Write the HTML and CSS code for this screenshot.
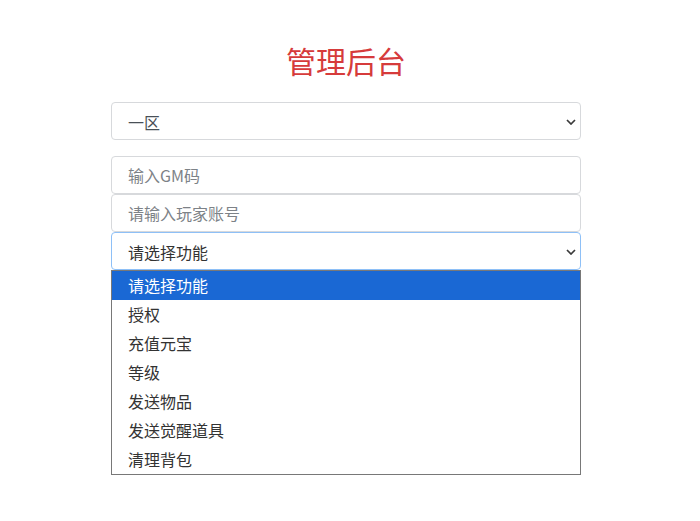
FILE: index.html
```html
<!DOCTYPE html>
<html lang="zh">
<head>
<meta charset="utf-8">
<title>管理后台</title>
<link rel="stylesheet" href="styles.css">
</head>
<body>
<div class="panel">
  <h1 class="title">管理后台</h1>
  <div class="field">
    <div class="control box">一区</div>
    <svg class="chev" width="10" height="6" viewBox="0 0 10 6"><path d="M1 1l4 4 4-4" fill="none" stroke="#3a3a3a" stroke-width="1.7"/></svg>
  </div>
  <div class="stack">
    <input class="control" type="text" placeholder="输入GM码">
    <input class="control" type="text" placeholder="请输入玩家账号">
    <div class="field">
      <div class="control box focused">请选择功能</div>
      <svg class="chev" width="10" height="6" viewBox="0 0 10 6"><path d="M1 1l4 4 4-4" fill="none" stroke="#3a3a3a" stroke-width="1.7"/></svg>
    </div>
    <div class="choices">
      <div class="choice on">请选择功能</div>
      <div class="choice">授权</div>
      <div class="choice">充值元宝</div>
      <div class="choice">等级</div>
      <div class="choice">发送物品</div>
      <div class="choice">发送觉醒道具</div>
      <div class="choice">清理背包</div>
    </div>
  </div>
</div>
</body>
</html>
```

FILE: styles.css
```css
html, body {
  margin: 0;
  padding: 0;
  background: #fff;
  font-family: "Noto Sans CJK SC", "Noto Sans", sans-serif;
}
.panel {
  width: 470px;
  margin-left: 111px;
  padding-top: 40px;
}
.title {
  margin: 0 0 22px;
  text-align: center;
  color: #d63b3b;
  font-size: 30px;
  font-weight: 400;
  line-height: 40px;
}
.field {
  position: relative;
}
.control {
  display: block;
  box-sizing: border-box;
  width: 100%;
  height: 38px;
  margin: 0;
  padding: 0 12px 1px 16px;
  border: 1px solid #d7d9dc;
  border-radius: 4px;
  background: #fff;
  font-family: inherit;
  font-size: 16px;
  color: #495057;
  outline: none;
}
.control::placeholder {
  color: #7d8287;
}
.box {
  line-height: 33px;
  padding-top: 3px;
  padding-bottom: 0;
}
.focused {
  border-color: #8ec0f7;
  color: #333;
}
.chev {
  position: absolute;
  right: 5px;
  top: 17px;
}
.stack {
  margin-top: 16px;
}
.choices {
  border: 1px solid #787878;
  background: #fff;
}
.choice {
  height: 29px;
  line-height: 29px;
  padding-left: 16px;
  font-size: 16px;
  color: #333;
}
.choice.on {
  background: #1a68d4;
  color: #fff;
}
```
